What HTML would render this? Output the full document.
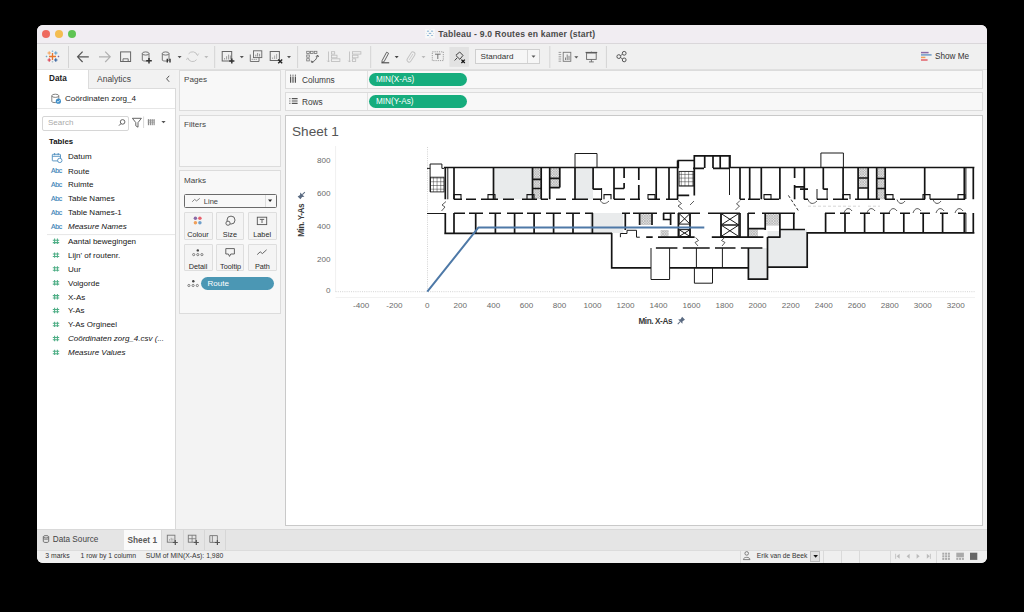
<!DOCTYPE html>
<html><head><meta charset="utf-8">
<style>
*{box-sizing:border-box;margin:0;padding:0}
html,body{width:1024px;height:612px;background:#000;overflow:hidden;font-family:"Liberation Sans",sans-serif;color:#333}
.a{position:absolute}
.t{position:absolute;white-space:nowrap;line-height:1;z-index:6}
svg.a{z-index:5}
#win{position:absolute;left:37px;top:25px;width:950px;height:538px;background:#f3f3f3;border-radius:6px;overflow:hidden}
</style></head><body>
<div id="win"></div>
<!-- title bar -->
<div class="a" style="left:37px;top:25px;width:950px;height:19px;background:#f1edf2;border-radius:6px 6px 0 0;border-bottom:1px solid #dad7da"></div>
<div class="a" style="left:42px;top:30px;width:8px;height:8px;border-radius:50%;background:#ee6a5f"></div>
<div class="a" style="left:55px;top:30px;width:8px;height:8px;border-radius:50%;background:#f4bd50"></div>
<div class="a" style="left:68px;top:30px;width:8px;height:8px;border-radius:50%;background:#5fc454"></div>
<div class="t" style="left:438.2px;top:29.6px;font-size:8.6px;letter-spacing:0.2px;font-weight:bold;color:#4a4a4a">Tableau - 9.0 Routes en kamer (start)</div>
<svg class="a" style="left:0;top:0" width="1024" height="612" fill="none">
 <rect x="425.2" y="28.8" width="9.6" height="9.6" fill="#f8f8f8"/>
 <g fill="#8fb6d6"><ellipse cx="428" cy="31.2" rx="1.2" ry="0.6"/><ellipse cx="432" cy="31.2" rx="1.2" ry="0.6"/><ellipse cx="430" cy="33.4" rx="1.4" ry="0.6"/><ellipse cx="428" cy="35.5" rx="1.2" ry="0.6"/><ellipse cx="432" cy="35.5" rx="1.2" ry="0.6"/><circle cx="426.4" cy="33.4" r="0.35"/><circle cx="433.6" cy="33.4" r="0.35"/><circle cx="430" cy="29.6" r="0.35"/><circle cx="430" cy="37.2" r="0.35"/></g>
</svg>

<!-- toolbar -->
<div class="a" style="left:37px;top:44px;width:950px;height:26px;background:#f0f0f0;border-bottom:1px solid #e0e0e0"></div>


<!-- toolbar icons -->
<svg class="a" style="left:0;top:0" width="1024" height="612" viewBox="0 0 1024 612" fill="none">
 <g stroke-linecap="butt">
  <!-- tableau logo -->
  <g transform="translate(52.5,56.5)">
   <path d="M0,-3.5V3.5M-3.5,0H3.5" stroke="#e8762d" stroke-width="1.3"/>
   <path d="M-3.3,-5.2V-1.8M-5,-3.5H-1.6" stroke="#f5a052" stroke-width="1"/>
   <path d="M3.3,-5.2V-1.8M1.6,-3.5H5" stroke="#5b9bc9" stroke-width="1"/>
   <path d="M-3.3,1.8V5.2M-5,3.5H-1.6" stroke="#d93a4a" stroke-width="1.1"/>
   <path d="M3.3,1.8V5.2M1.6,3.5H5" stroke="#2a5a9a" stroke-width="1.1"/>
   <path d="M0,-6V-4.4M-0.8,-5.2H0.8" stroke="#7ab0d6" stroke-width="0.7"/>
   <path d="M0,4.4V6M-0.8,5.2H0.8" stroke="#a3b7c9" stroke-width="0.7"/>
   <path d="M-6,-0.8V0.8M-6.8,0H-5.2" stroke="#5fa7c9" stroke-width="0.7"/>
   <path d="M6,-0.8V0.8M5.2,0H6.8" stroke="#6a5a9a" stroke-width="0.7"/>
  </g>
  <path d="M68.5,46V68" stroke="#d4d4d4" stroke-width="1"/>
  <!-- back/fwd -->
  <path d="M88.8,56.8H78M82.6,51.6L77.6,56.8L82.6,62" stroke="#555" stroke-width="1.2"/>
  <path d="M99,56.8H109.8M105.2,51.6L110.2,56.8L105.2,62" stroke="#b0b0b0" stroke-width="1.2"/>
  <!-- save -->
  <rect x="120.6" y="51.9" width="10" height="9.6" stroke="#666" stroke-width="1"/>
  <path d="M123,61.5V58.8H128.2V61.5" stroke="#666" stroke-width="0.9"/>
  <!-- db + -->
  <path d="M142.3,53.5V60.2C142.3,61.3 149,61.3 149,60.2V53.5" stroke="#666" stroke-width="0.9"/>
  <ellipse cx="145.65" cy="53.5" rx="3.35" ry="1.6" stroke="#666" stroke-width="0.9"/>
  <path d="M149,58V63.6M146.2,60.8H151.8" stroke="#333" stroke-width="1.5"/>
  <!-- db pause -->
  <path d="M162.3,53.5V60.2C162.3,61.3 169,61.3 169,60.2V53.5" stroke="#666" stroke-width="0.9"/>
  <ellipse cx="165.65" cy="53.5" rx="3.35" ry="1.6" stroke="#666" stroke-width="0.9"/>
  <path d="M167.3,58.8V62.6M170,58.8V62.6" stroke="#333" stroke-width="1.4"/>
  <path d="M177.6,56H181.6L179.6,58.3Z" fill="#555"/>
  <!-- refresh -->
  <path d="M197.4,55.4A5,5 0 0 0 188.6,53.8M187.8,58A5,5 0 0 0 196.6,59.6" stroke="#c4c4c4" stroke-width="1"/><path d="M196.2,53.6L197.6,55.6L198.8,53.4M189,59.8L187.6,57.8L186.4,60" stroke="#c4c4c4" stroke-width="0.8"/>
  <path d="M204.3,56H208.3L206.3,58.3Z" fill="#bbb"/>
  <path d="M214.7,46V68" stroke="#d4d4d4" stroke-width="1"/>
  <!-- new worksheet -->
  <rect x="222.2" y="51.5" width="9.5" height="9.5" stroke="#666" stroke-width="1"/>
  <path d="M224.6,59.5V58M226.6,59.5V56.2M228.6,59.5V54.6M230.4,59.5V55.5" stroke="#888" stroke-width="0.8"/>
  <path d="M231.8,58.4V63.6M229.2,61H234.4" stroke="#333" stroke-width="1.5"/>
  <path d="M239.8,56H243.8L241.8,58.3Z" fill="#555"/>
  <!-- duplicate -->
  <rect x="253.5" y="50.8" width="8.3" height="6.8" stroke="#666" stroke-width="0.9"/>
  <path d="M250.3,54.5V61.5H259V57.6" stroke="#666" stroke-width="0.9"/>
  <path d="M255.8,56.5V54.6M257.6,56.5V53M259.6,56.5V53.8M252.2,60V58.8M254.2,60V58.8M256.2,60V58.8" stroke="#777" stroke-width="0.8"/>
  <!-- clear sheet -->
  <rect x="270.2" y="51.5" width="9.2" height="9" stroke="#666" stroke-width="1"/>
  <path d="M272.6,59V57.5M274.6,59V55.5M276.6,59V54" stroke="#999" stroke-width="0.8"/>
  <path d="M278.2,59.4L282.2,63.2M282.2,59.4L278.2,63.2" stroke="#222" stroke-width="1.4"/>
  <path d="M287,56H291L289,58.3Z" fill="#555"/>
  <path d="M297.6,46V68" stroke="#d4d4d4" stroke-width="1"/>
  <!-- swap -->
  <rect x="306.7" y="51.3" width="2.6" height="2.2" stroke="#777" stroke-width="0.8"/>
  <rect x="310.5" y="51.3" width="2.6" height="2.2" stroke="#777" stroke-width="0.8"/>
  <rect x="314.3" y="51.3" width="2.6" height="2.2" stroke="#777" stroke-width="0.8"/>
  <rect x="306.7" y="55" width="2.6" height="2.2" stroke="#777" stroke-width="0.8"/>
  <rect x="306.7" y="58.7" width="2.6" height="2.2" stroke="#777" stroke-width="0.8"/>
  <path d="M312,61.8C314.5,61.5 316.5,59.5 317.5,55.5M316,56.8L317.6,55L318.6,57M311.2,60.6L311.6,62.4L313.4,62.2" stroke="#555" stroke-width="0.9"/>
  <!-- sort asc/desc -->
  <path d="M328.5,51.5V62M327.2,60.6L328.5,62L329.8,60.6" stroke="#bbb" stroke-width="0.8"/>
  <rect x="331.5" y="51.7" width="3.2" height="2.4" stroke="#bbb" stroke-width="0.8"/>
  <rect x="331.5" y="55.2" width="5.5" height="2.6" stroke="#bbb" stroke-width="0.8"/>
  <rect x="331.5" y="58.8" width="8.4" height="2.6" stroke="#bbb" stroke-width="0.8"/>
  <path d="M349.5,51.5V62M348.2,60.6L349.5,62L350.8,60.6" stroke="#bbb" stroke-width="0.8"/>
  <rect x="352.5" y="51.7" width="8.4" height="2.4" stroke="#bbb" stroke-width="0.8"/>
  <rect x="352.5" y="55.2" width="5.5" height="2.6" stroke="#bbb" stroke-width="0.8"/>
  <rect x="352.5" y="58.8" width="3.2" height="2.6" stroke="#bbb" stroke-width="0.8"/>
  <path d="M370.7,46V68" stroke="#d4d4d4" stroke-width="1"/>
  <!-- pen -->
  <path d="M382,60.8L386.6,52.2L388.6,53.3L384,61.8L382,62.3Z" stroke="#555" stroke-width="0.9"/>
  <path d="M381.4,62.8H389.2" stroke="#444" stroke-width="1.1"/>
  <path d="M394.7,56H398.7L396.7,58.3Z" fill="#444"/>
  <!-- paperclip -->
  <g transform="translate(411,57) rotate(-58)"><rect x="-5.6" y="-2.1" width="11.2" height="4.2" rx="2.1" stroke="#c2c2c2" stroke-width="0.9"/><path d="M-3.4,0H3.6" stroke="#c8c8c8" stroke-width="0.8"/></g>
  <path d="M421.5,56H425.5L423.5,58.3Z" fill="#bbb"/>
  <!-- T box -->
  <rect x="432.3" y="51.8" width="11" height="8.8" stroke="#888" stroke-width="0.8" stroke-dasharray="1.2 1"/>
  <path d="M435,54.2H440.6M437.8,54.2V59" stroke="#666" stroke-width="0.9"/>
  <!-- pin pressed -->
  <rect x="449.4" y="47" width="19.5" height="19.8" fill="#e2e2e2" stroke="none"/>
  <path d="M454.6,60.5L457.2,57.8M456,55.2L459.7,52L463,55.4L459.9,59.3M455.8,55.4L460,59.5" stroke="#444" stroke-width="1"/>
  <path d="M461.4,59.6L464.8,63M464.8,59.6L461.4,63" stroke="#111" stroke-width="1.3"/>
  <!-- standard dropdown -->
  <rect x="475.5" y="49.5" width="64" height="14" fill="#f6f6f6" stroke="#cfcfcf" stroke-width="1"/>
  <path d="M527.5,50V63" stroke="#d6d6d6" stroke-width="1"/>
  <path d="M531.5,55.5H535.5L533.5,57.8Z" fill="#555"/>
  <path d="M549.8,46V68" stroke="#d4d4d4" stroke-width="1"/>
  <!-- show labels icon -->
  <rect x="563.2" y="52.3" width="7.6" height="9" stroke="#777" stroke-width="0.9"/>
  <path d="M565.5,60V57.5M567.2,60V54.5M569,60V55.8" stroke="#666" stroke-width="0.8"/>
  <path d="M558.6,52.4H561.2M558.6,54.6H561.2M558.6,56.8H561.2M558.6,59H561.2M558.6,61.2H561.2" stroke="#888" stroke-width="0.8"/>
  <path d="M574.3,56.3H578.3L576.3,58.6Z" fill="#555"/>
  <!-- presentation -->
  <path d="M585.6,52.5H597.2" stroke="#555" stroke-width="1.2"/>
  <rect x="586.6" y="53" width="9.6" height="6.4" stroke="#666" stroke-width="0.9"/>
  <path d="M591.4,59.4V61.8M589,61.9H593.8M591.4,51.6V52.5" stroke="#666" stroke-width="0.9"/>
  <path d="M606.4,46V68" stroke="#d4d4d4" stroke-width="1"/>
  <!-- share -->
  <circle cx="618.8" cy="56.6" r="1.9" stroke="#555" stroke-width="1"/>
  <circle cx="624.2" cy="53.3" r="1.9" stroke="#555" stroke-width="1"/>
  <circle cx="624.2" cy="59.9" r="1.9" stroke="#555" stroke-width="1"/>
  <path d="M620.5,55.6L622.5,54.3M620.5,57.6L622.5,58.9" stroke="#555" stroke-width="0.9"/>
  <!-- show me -->
  <path d="M921,52.6H928.6" stroke="#8a6aa6" stroke-width="1.5"/>
  <path d="M921,54.9H931.6" stroke="#6f9bc8" stroke-width="1.5"/>
  <path d="M921,57.4H925.4" stroke="#eea05a" stroke-width="1.5"/>
  <path d="M921,60H927.6" stroke="#e2606a" stroke-width="1.5"/>
 </g>
</svg>
<div class="t" style="left:480.6px;top:52.8px;font-size:8.1px;color:#333">Standard</div>
<div class="t" style="left:935px;top:52.8px;font-size:8.2px;color:#333">Show Me</div>

<!-- left data pane -->
<div class="a" style="left:37px;top:70px;width:139px;height:459px;background:#fff;border-right:1px solid #d9d9d9"></div>
<div class="a" style="left:88px;top:70px;width:88px;height:19px;background:#f2f2f2;border-left:1px solid #dcdcdc;border-bottom:1px solid #dcdcdc"></div>
<div class="t" style="left:49px;top:75.3px;font-size:8.2px;font-weight:bold;color:#222">Data</div>
<div class="t" style="left:97px;top:75px;font-size:8.5px;color:#444">Analytics</div>
<div class="a" style="left:37px;top:108px;width:138px;height:1px;background:#e6e6e6"></div>
<div class="t" style="left:65px;top:94.6px;font-size:8.1px;color:#222">Coördinaten zorg_4</div>
<div class="a" style="left:42px;top:116px;width:87px;height:15px;background:#fff;border:1px solid #d6d6d6;border-radius:2px"></div>
<div class="t" style="left:48px;top:119px;font-size:8px;color:#aaa">Search</div>
<div class="t" style="left:49px;top:138.4px;font-size:7.8px;font-weight:bold;color:#111">Tables</div>

<div class="t" style="left:68px;top:153.4px;font-size:8px;color:#151515;">Datum</div>
<div class="t" style="left:68px;top:167.5px;font-size:8px;color:#151515;">Route</div>
<div class="t" style="left:51px;top:168.2px;font-size:6.9px;color:#3b84b8;letter-spacing:-0.35px;font-weight:normal;-webkit-text-stroke:0.15px #3b84b8">Abc</div>
<div class="t" style="left:68px;top:181.4px;font-size:8px;color:#151515;">Ruimte</div>
<div class="t" style="left:51px;top:182.1px;font-size:6.9px;color:#3b84b8;letter-spacing:-0.35px;font-weight:normal;-webkit-text-stroke:0.15px #3b84b8">Abc</div>
<div class="t" style="left:68px;top:195.1px;font-size:8px;color:#151515;">Table Names</div>
<div class="t" style="left:51px;top:195.8px;font-size:6.9px;color:#3b84b8;letter-spacing:-0.35px;font-weight:normal;-webkit-text-stroke:0.15px #3b84b8">Abc</div>
<div class="t" style="left:68px;top:208.9px;font-size:8px;color:#151515;">Table Names-1</div>
<div class="t" style="left:51px;top:209.6px;font-size:6.9px;color:#3b84b8;letter-spacing:-0.35px;font-weight:normal;-webkit-text-stroke:0.15px #3b84b8">Abc</div>
<div class="t" style="left:68px;top:222.9px;font-size:8px;color:#151515;font-style:italic;">Measure Names</div>
<div class="t" style="left:51px;top:223.6px;font-size:6.9px;color:#3b84b8;letter-spacing:-0.35px;font-weight:normal;-webkit-text-stroke:0.15px #3b84b8">Abc</div>
<div class="t" style="left:68px;top:238.1px;font-size:8px;color:#151515;">Aantal bewegingen</div>
<div class="t" style="left:68px;top:251.9px;font-size:8px;color:#151515;">Lijn' of routenr.</div>
<div class="t" style="left:68px;top:265.7px;font-size:8px;color:#151515;">Uur</div>
<div class="t" style="left:68px;top:279.6px;font-size:8px;color:#151515;">Volgorde</div>
<div class="t" style="left:68px;top:293.5px;font-size:8px;color:#151515;">X-As</div>
<div class="t" style="left:68px;top:307.3px;font-size:8px;color:#151515;">Y-As</div>
<div class="t" style="left:68px;top:321.2px;font-size:8px;color:#151515;">Y-As Orgineel</div>
<div class="t" style="left:68px;top:335.3px;font-size:8px;color:#151515;font-style:italic;">Coördinaten zorg_4.csv (...</div>
<div class="t" style="left:68px;top:349.2px;font-size:8px;color:#151515;font-style:italic;">Measure Values</div>
<svg class="a" style="left:0;top:0" width="1024" height="612" fill="none">
<g transform="translate(0,0.9)"><rect x="52.3" y="153.4" width="8.2" height="6.6" rx="0.6" stroke="#4f8fbf" stroke-width="0.9"/>
<path d="M52.3,155.4H60.5M54.6,152.1V154.3M58.2,152.1V154.3" stroke="#4f8fbf" stroke-width="0.9"/>
<circle cx="59.8" cy="159.5" r="2.2" fill="#fff" stroke="#4f8fbf" stroke-width="0.9"/></g>
<path d="M54.6,238.6V244.0M57.4,238.6V244.0M52.8,240.2H59.2M52.8,242.6H59.2" stroke="#4fae86" stroke-width="1.05"/>
<path d="M54.6,252.4V257.8M57.4,252.4V257.8M52.8,254.0H59.2M52.8,256.4H59.2" stroke="#4fae86" stroke-width="1.05"/>
<path d="M54.6,266.2V271.6M57.4,266.2V271.6M52.8,267.8H59.2M52.8,270.2H59.2" stroke="#4fae86" stroke-width="1.05"/>
<path d="M54.6,280.1V285.5M57.4,280.1V285.5M52.8,281.7H59.2M52.8,284.1H59.2" stroke="#4fae86" stroke-width="1.05"/>
<path d="M54.6,294.0V299.4M57.4,294.0V299.4M52.8,295.6H59.2M52.8,298.0H59.2" stroke="#4fae86" stroke-width="1.05"/>
<path d="M54.6,307.8V313.2M57.4,307.8V313.2M52.8,309.4H59.2M52.8,311.8H59.2" stroke="#4fae86" stroke-width="1.05"/>
<path d="M54.6,321.7V327.1M57.4,321.7V327.1M52.8,323.3H59.2M52.8,325.7H59.2" stroke="#4fae86" stroke-width="1.05"/>
<path d="M54.6,335.8V341.2M57.4,335.8V341.2M52.8,337.4H59.2M52.8,339.8H59.2" stroke="#4fae86" stroke-width="1.05"/>
<path d="M54.6,349.7V355.1M57.4,349.7V355.1M52.8,351.3H59.2M52.8,353.7H59.2" stroke="#4fae86" stroke-width="1.05"/>
<path d="M47,234.6H175" stroke="#e6e6e6" stroke-width="1"/>
<!-- db icon -->
<path d="M51.8,95.8V101.6C51.8,102.9 58.8,102.9 58.8,101.6V95.8" stroke="#777" stroke-width="0.9"/>
<ellipse cx="55.3" cy="95.8" rx="3.5" ry="1.6" stroke="#777" stroke-width="0.9"/>
<circle cx="58.4" cy="101.2" r="2.6" fill="#3f8fc9"/>
<path d="M57.1,101.3L58.1,102.2L59.8,100.3" stroke="#fff" stroke-width="0.8"/>
<!-- search magnifier -->
<circle cx="122.6" cy="121.9" r="2.3" stroke="#555" stroke-width="0.9"/>
<path d="M121,123.6L119,125.6" stroke="#555" stroke-width="1"/>
<!-- filter icon -->
<path d="M132.4,118.3H141.4L138,122.6V127.2L135.8,125.8V122.6Z" stroke="#555" stroke-width="0.9"/>
<path d="M143.6,116.5V128" stroke="#d8d8d8" stroke-width="1"/>
<!-- grid icon -->
<path d="M148.4,119.2V125.2M150.3,119.2V125.2M152.2,119.2V125.2M154.1,119.2V125.2" stroke="#777" stroke-width="1"/><path d="M147.8,120.3H154.6M147.8,122.2H154.6" stroke="#999" stroke-width="0.6"/>
<path d="M161.4,121H165.6L163.5,123.3Z" fill="#555"/>
<!-- collapse chevron -->
<path d="M169.2,75.8L166.6,78.8L169.2,81.8" stroke="#555" stroke-width="1"/>
</svg>

<!-- shelves column -->
<div class="a" style="left:179px;top:70px;width:102px;height:41px;background:#f8f8f8;border:1px solid #dcdcdc"></div>
<div class="t" style="left:184px;top:76px;font-size:8.1px;color:#444">Pages</div>
<div class="a" style="left:179px;top:115px;width:102px;height:51.6px;background:#f8f8f8;border:1px solid #dcdcdc"></div>
<div class="t" style="left:184px;top:121px;font-size:8.1px;color:#444">Filters</div>
<div class="a" style="left:179px;top:170px;width:102px;height:144px;background:#f8f8f8;border:1px solid #dcdcdc"></div>
<div class="t" style="left:184px;top:176.5px;font-size:8.1px;color:#444">Marks</div>


<!-- marks card -->
<div class="a" style="left:184px;top:194.4px;width:92.5px;height:13.2px;background:#f8f8f8;border:1px solid #6a6a6a;border-radius:1.5px"></div>
<div class="a" style="left:264.6px;top:195.4px;width:1px;height:11.2px;background:#ddd"></div>
<div class="t" style="left:203.8px;top:197.6px;font-size:7.5px;color:#444">Line</div>
<div class="a" style="left:184.1px;top:212px;width:28.6px;height:27.6px;background:#f4f4f4;border:1px solid #dedede;border-radius:1px"></div>
<div class="a" style="left:216.3px;top:212px;width:27.4px;height:27.6px;background:#f4f4f4;border:1px solid #dedede;border-radius:1px"></div>
<div class="a" style="left:248.2px;top:212px;width:28.5px;height:27.6px;background:#f4f4f4;border:1px solid #dedede;border-radius:1px"></div>
<div class="a" style="left:184.1px;top:243.6px;width:28.6px;height:27.5px;background:#f4f4f4;border:1px solid #dedede;border-radius:1px"></div>
<div class="a" style="left:216.3px;top:243.6px;width:27.4px;height:27.5px;background:#f4f4f4;border:1px solid #dedede;border-radius:1px"></div>
<div class="a" style="left:248.2px;top:243.6px;width:28.5px;height:27.5px;background:#f4f4f4;border:1px solid #dedede;border-radius:1px"></div>
<div class="t" style="left:177.9px;width:40px;text-align:center;top:230.7px;font-size:7.3px;color:#2a2a2a">Colour</div>
<div class="t" style="left:209.9px;width:40px;text-align:center;top:230.7px;font-size:7.3px;color:#2a2a2a">Size</div>
<div class="t" style="left:242.2px;width:40px;text-align:center;top:230.7px;font-size:7.3px;color:#2a2a2a">Label</div>
<div class="t" style="left:178.0px;width:40px;text-align:center;top:262.5px;font-size:7.3px;color:#2a2a2a">Detail</div>
<div class="t" style="left:210.6px;width:40px;text-align:center;top:262.5px;font-size:7.3px;color:#2a2a2a">Tooltip</div>
<div class="t" style="left:242.4px;width:40px;text-align:center;top:262.5px;font-size:7.3px;color:#2a2a2a">Path</div>
<div class="a" style="left:200.7px;top:277.1px;width:73.4px;height:13.4px;background:#4b97b4;border-radius:7px"></div>
<div class="t" style="left:207.6px;top:279.6px;font-size:8px;color:#fff">Route</div>
<svg class="a" style="left:0;top:0" width="1024" height="612" fill="none">
 <path d="M192.2,201.8L194.6,199.4L196.6,200.9L199.8,198.4" stroke="#777" stroke-width="0.9"/>
 <path d="M268,199.6H272.2L270.1,202Z" fill="#222"/>
 <circle cx="195.4" cy="218.3" r="1.75" fill="#8a6aa6"/>
 <circle cx="199.9" cy="218.3" r="1.75" fill="#e8616d"/>
 <circle cx="195.4" cy="222.7" r="1.75" fill="#f0a05a"/>
 <circle cx="199.9" cy="222.7" r="1.75" fill="#6f9fcb"/>
 <circle cx="231" cy="220.1" r="4" stroke="#555" stroke-width="0.9"/>
 <circle cx="228" cy="223.2" r="2.1" fill="#f4f4f4" stroke="#555" stroke-width="0.9"/>
 <rect x="257.3" y="217.2" width="9.4" height="7.4" stroke="#555" stroke-width="0.9"/>
 <path d="M259.8,219.4H264.2M262,219.4V223" stroke="#555" stroke-width="0.9"/>
 <circle cx="197.8" cy="250.4" r="1.2" fill="#444"/>
 <circle cx="193.7" cy="254.6" r="1.1" stroke="#555" stroke-width="0.7"/>
 <circle cx="197.8" cy="254.6" r="1.1" stroke="#555" stroke-width="0.7"/>
 <circle cx="201.9" cy="254.6" r="1.1" stroke="#555" stroke-width="0.7"/>
 <path d="M225.8,248.6H234.4V254H230.8L229.5,256.4L228.4,254H225.8Z" stroke="#555" stroke-width="0.9"/>
 <path d="M257.2,254.6L260.2,251.8L262.4,253.6L266.6,249.8" stroke="#555" stroke-width="0.9"/>
 <circle cx="193.3" cy="281.3" r="1.2" fill="#444"/>
 <circle cx="188.9" cy="285.5" r="1.1" stroke="#555" stroke-width="0.7"/>
 <circle cx="193.1" cy="285.5" r="1.1" stroke="#555" stroke-width="0.7"/>
 <circle cx="197.3" cy="285.5" r="1.1" stroke="#555" stroke-width="0.7"/>
 <!-- columns / rows icons -->
 <path d="M290.6,76.5V82.8M293,76.5V82.8M295.4,76.5V82.8" stroke="#555" stroke-width="1.2"/>
 <circle cx="290.6" cy="75.2" r="0.6" fill="#555"/><circle cx="293" cy="75.2" r="0.6" fill="#555"/><circle cx="295.4" cy="75.2" r="0.6" fill="#555"/>
 <path d="M291.8,98.6H297.6M291.8,101H297.6M291.8,103.4H297.6" stroke="#555" stroke-width="1.1"/>
 <path d="M289.4,98.6H290.4M289.4,101H290.4M289.4,103.4H290.4" stroke="#555" stroke-width="1.1"/>
</svg>

<!-- columns / rows shelves -->
<div class="a" style="left:285px;top:70px;width:698px;height:19px;background:#f8f8f8;border:1px solid #dcdcdc"></div>
<div class="a" style="left:367px;top:71px;width:1px;height:17px;background:#e2e2e2"></div>
<div class="t" style="left:302px;top:75.6px;font-size:8.3px;color:#3a3a3a">Columns</div>
<div class="a" style="left:369px;top:72.5px;width:98px;height:13.5px;border-radius:7px;background:#16ad7d"></div>
<div class="t" style="left:376px;top:76.1px;font-size:8.2px;color:#fff">MIN(X-As)</div>
<div class="a" style="left:285px;top:92px;width:698px;height:19px;background:#f8f8f8;border:1px solid #dcdcdc"></div>
<div class="a" style="left:367px;top:93px;width:1px;height:17px;background:#e2e2e2"></div>
<div class="t" style="left:302px;top:97.8px;font-size:8.3px;color:#3a3a3a">Rows</div>
<div class="a" style="left:369px;top:95px;width:98px;height:13px;border-radius:7px;background:#16ad7d"></div>
<div class="t" style="left:376px;top:98.4px;font-size:8.2px;color:#fff">MIN(Y-As)</div>

<!-- view -->
<div class="a" style="left:285px;top:115px;width:698px;height:411px;background:#fff;border:1px solid #c9c9c9"></div>
<div class="t" style="left:292px;top:125px;font-size:13.6px;color:#555">Sheet 1</div>

<!-- CHART -->
<svg class="a" style="left:0;top:0" width="1024" height="612" fill="none">
<defs><pattern id="hat" width="2.6" height="2.6" patternUnits="userSpaceOnUse"><rect width="2.6" height="2.6" fill="#e4e4e4"/><path d="M0,0L2.6,2.6M2.6,0L0,2.6" stroke="#9a9a9a" stroke-width="0.5"/></pattern><pattern id="grd" width="3.7" height="3.7" patternUnits="userSpaceOnUse"><rect width="3.7" height="3.7" fill="#fff"/><path d="M0,0H3.7M0,0V3.7" stroke="#222" stroke-width="0.9"/></pattern></defs>
<path d="M335.6,146V292" stroke="#f0f0f0" stroke-width="1"/>
<path d="M335.6,291.7H975" stroke="#c8c8c8" stroke-width="0.8" stroke-dasharray="1 1.2"/>
<path d="M427.5,147V291.7" stroke="#c8c8c8" stroke-width="0.8" stroke-dasharray="1 1.2"/>
<path d="M335.6,297.5H975" stroke="#f2f2f2" stroke-width="1"/>
<rect x="493.5" y="168" width="38.5" height="31.3" fill="#e9ebec"/>
<rect x="575" y="168" width="18.0" height="31.3" fill="#e9ebec"/>
<rect x="590" y="213" width="33.3" height="20.0" fill="#e9ebec"/>
<rect x="748.4" y="248" width="19.1" height="31.0" fill="#e9ebec"/>
<rect x="767.5" y="231" width="39.5" height="36.2" fill="#e9ebec"/>
<rect x="780" y="229.5" width="27.0" height="3.5" fill="#e9ebec"/>
<rect x="532.5" y="168" width="8.7" height="31.3" fill="url(#hat)"/>
<rect x="549.7" y="168" width="10.1" height="19.6" fill="url(#hat)"/>
<rect x="858.1" y="168" width="10.1" height="20.0" fill="url(#hat)"/>
<rect x="876.7" y="168" width="8.5" height="31.3" fill="url(#hat)"/>
<rect x="639.6" y="213.3" width="11.9" height="11.7" fill="url(#hat)"/>
<rect x="660.6" y="230" width="8.0" height="7.0" fill="url(#hat)"/>
<rect x="765.5" y="213.6" width="14.1" height="12.0" fill="url(#hat)"/>
<rect x="749" y="229.5" width="9.0" height="7.5" fill="url(#hat)"/>
<rect x="430.5" y="177.2" width="13.5" height="14.7" fill="url(#grd)" stroke="#222" stroke-width="0.9"/>
<rect x="679.1" y="171.4" width="14.7" height="14.7" fill="url(#grd)" stroke="#222" stroke-width="0.9"/>
<path d="M444,167.5H678.3V160.5H694.3V155.9H730V167.5H974.4 M445.3,167.5V199.3M445.3,213V233.5M973.3,167.5V199.3M973.3,213V233 M444.3,233.3H612 M611.7,233V267.8H651M669.6,267.8H748.4 M748.4,248V279.1H767.5V237 M767.5,267.2H807.2V232.9H974.4 M711.8,237.2H763.4M658,237.2H694.6M646.2,237.2H652.7M767.7,237.2H780.6 M532.5,179.4H541.2M532.5,188.5H541.2M549.7,178.3H559.8M858.1,178H868.2M876.7,178.5H885.2M876.7,188.5H885.2 M704.7,155.9V168M713,155.9V168M720.2,155.9V168M693,168.3H704M713,168.3H730 M454,167.5V199.3 M493.5,167.5V199.3 M532.5,167.5V199.3 M541.2,167.5V199.3 M549.7,167.5V199.3 M559.8,167.5V187.6 M575,167.5V199.3 M593.1,167.5V189.2 M614,167.5V199.3 M624.1,167.5V178 M624.1,183V188.5 M638.8,167.5V180 M638.8,185V199.3 M656.2,167.5V199.3 M669,167.5V199.3 M677.6,160.5V199.3 M694.3,155.9V195.4 M729.5,155.9V168 M740,167.5V199.3 M749.7,167.5V199.3 M761.3,167.5V199.3 M779.9,167.5V199.3 M794.6,167.5V178 M794.6,185V199.3 M804.3,167.5V199.3 M823.3,167.5V189.2 M843.1,167.5V199.3 M858.1,167.5V199.3 M868.2,167.5V199.3 M876.7,167.5V199.3 M885.2,167.5V199.3 M924.7,167.5V199.3 M964.3,167.5V199.3 M549.7,187.6H559.8M858.1,188H868.2M614,188.5H624.1M794.6,186.9H805M593.1,189.2H602M800,189.2H808M823.3,189.2H828M678,195.4H689.2 M454,213V233.3 M475.7,213V233.3 M495.4,213V233.3 M514.6,213V233.3 M534.1,213V233.3 M553.6,213V233.3 M573,213V233.3 M592.4,213V233.3 M625.3,213V230 M639.6,213V225 M652,213V225 M670.6,213V225 M678.4,213V237 M690,213V237 M721,213V237 M740,213V237 M748.1,213V237 M765.2,213V230 M779.9,213V237 M793.8,213V230 M825.6,213V233 M845,213V233 M864.6,213V233 M883.7,213V233 M903.8,213V233 M923.2,213V233 M942.6,213V233 M964.3,213V233 M748,228.7H765.2M779.9,229.5H805M663.6,213V219.5H670.6" stroke="#141414" stroke-width="1.7"/>
<path d="M454,199.3H462 M466,199.3H476 M481,199.3H488 M488,199.3H498 M503,199.3H514 M522,199.3H527 M527,199.3H537 M541,199.3H548 M556,199.3H566 M572,199.3H588 M593,199.3H602 M614,199.3H625 M630,199.3H640 M648,199.3H660 M666,199.3H678 M740,199.3H745 M748,199.3H760 M764,199.3H770 M770,199.3H779 M804,199.3H808 M817,199.3H828 M833,199.3H848 M855,199.3H880 M885,199.3H895 M900,199.3H925 M930,199.3H958 M958,199.3H965" stroke="#141414" stroke-width="1.6"/>
<path d="M454,199.3V194.6H461V199.3 M488,199.3V194.6H495V199.3 M527,199.3V194.6H534V199.3 M604,199.3V194.6H611V199.3 M648,199.3V194.6H655V199.3 M764,199.3V194.6H771V199.3 M843,199.3V194.6H850V199.3 M886,199.3V194.6H893V199.3 M923,199.3V194.6H930V199.3 M958,199.3V194.6H965V199.3" stroke="#141414" stroke-width="1.1"/>
<path d="M454,213.2H465 M469,213.2H483 M489,213.2H501 M507,213.2H523 M527,213.2H541 M546,213.2H561 M566,213.2H580 M585,213.2H593 M622,213.2H630 M633,213.2H646 M645,213.2H657 M663,213.2H675 M678,213.2H700 M708,213.2H740 M748,213.2H755 M762,213.2H795 M825,213.2H835 M840,213.2H850 M860,213.2H870 M880,213.2H890 M900,213.2H910 M920,213.2H930 M940,213.2H948 M958,213.2H966" stroke="#141414" stroke-width="1.6"/>
<path d="M655.9,248H677.4M682.8,248H709.7M715,248H735.5M740.9,248H762.4" stroke="#141414" stroke-width="1.6"/>
<path d="M427,168.4H430.1M427,213.5H445.3 M430.1,191.9V164H441.9V168.4H444 M447.8,168V199.3M965.9,168V199M965.9,213V233 M575,167.5V153.5H597V167.5 M820.9,167.5V153H843.4V167.5 M651,248V279.5H669.6V248 M694.4,267.2V283.2H712.5V267.2 M696.4,248V267.2M722.4,248V267.2 M679.1,213.5H690V224.1H679.1ZM679.1,213.5L690,224.1M690,213.5L679.1,224.1 M679.1,229.6H690V236.5H679.1ZM679.1,229.6L690,236.5M690,229.6L679.1,236.5 M721,213.5H738.8V225H721ZM721,213.5L738.8,225M738.8,213.5L721,225 M721,225H738.8V236.5H721ZM721,225L738.8,236.5M738.8,225L721,236.5 M601.6,188V199.3M817,189V199.3M827.1,189V199.3 M729.5,168V195 M620.4,237.2V233.5H627V230.3H636.5V237.2H639.8" stroke="#1a1a1a" stroke-width="1"/>
<path d="M788.4,195.4L798.5,210.9" stroke="#333" stroke-width="1" stroke-dasharray="3 2"/>
<path d="M808,206.2H860M868,206.2H880" stroke="#bbb" stroke-width="0.6" stroke-dasharray="3 2"/>
<path d="M446,201.5L442,205L445,207L441.5,211M678,200.5L681.5,203.5L678,206L682.5,209.5M740,200.5L736.5,204L739.5,206L735.5,210 M600,199.5C602,205 606,204 609,201M808,199.5C810,205 814,204 817,201M897,199.5C899,205 903,204 905,201M933,199.5C935,205 939,204 941,201 M867,213C869,207 873,208 875,211M889,213C891,207 895,208 897,211M913,213C915,207 919,208 921,211M936,213C938,207 942,208 944,211M955,213C957,207 961,208 963,211M844,213C846,207 850,208 852,211 M695.7,237.5L698.5,240.5L695,242.5L698,246M724.7,237.5L721.5,240.5L725,242.5L722,246M694,201L690,205" stroke="#333" stroke-width="0.8"/>
<path d="M427.3,291.7L478.5,227.4H704.3" stroke="#4e79a7" stroke-width="2" stroke-linejoin="round"/>
<text x="330.5" y="163.1" text-anchor="end" font-family="Liberation Sans" font-size="8.1" fill="#6a6a6a">800</text>
<text x="330.5" y="196.0" text-anchor="end" font-family="Liberation Sans" font-size="8.1" fill="#6a6a6a">600</text>
<text x="330.5" y="229.4" text-anchor="end" font-family="Liberation Sans" font-size="8.1" fill="#6a6a6a">400</text>
<text x="330.5" y="262.3" text-anchor="end" font-family="Liberation Sans" font-size="8.1" fill="#6a6a6a">200</text>
<text x="330.5" y="292.7" text-anchor="end" font-family="Liberation Sans" font-size="8.1" fill="#6a6a6a">0</text>
<text x="361.2" y="308.3" text-anchor="middle" font-family="Liberation Sans" font-size="8.1" fill="#6a6a6a">-400</text>
<text x="394.3" y="308.3" text-anchor="middle" font-family="Liberation Sans" font-size="8.1" fill="#6a6a6a">-200</text>
<text x="427.3" y="308.3" text-anchor="middle" font-family="Liberation Sans" font-size="8.1" fill="#6a6a6a">0</text>
<text x="460.3" y="308.3" text-anchor="middle" font-family="Liberation Sans" font-size="8.1" fill="#6a6a6a">200</text>
<text x="493.4" y="308.3" text-anchor="middle" font-family="Liberation Sans" font-size="8.1" fill="#6a6a6a">400</text>
<text x="526.4" y="308.3" text-anchor="middle" font-family="Liberation Sans" font-size="8.1" fill="#6a6a6a">600</text>
<text x="559.4" y="308.3" text-anchor="middle" font-family="Liberation Sans" font-size="8.1" fill="#6a6a6a">800</text>
<text x="592.5" y="308.3" text-anchor="middle" font-family="Liberation Sans" font-size="8.1" fill="#6a6a6a">1000</text>
<text x="625.5" y="308.3" text-anchor="middle" font-family="Liberation Sans" font-size="8.1" fill="#6a6a6a">1200</text>
<text x="658.5" y="308.3" text-anchor="middle" font-family="Liberation Sans" font-size="8.1" fill="#6a6a6a">1400</text>
<text x="691.6" y="308.3" text-anchor="middle" font-family="Liberation Sans" font-size="8.1" fill="#6a6a6a">1600</text>
<text x="724.6" y="308.3" text-anchor="middle" font-family="Liberation Sans" font-size="8.1" fill="#6a6a6a">1800</text>
<text x="757.6" y="308.3" text-anchor="middle" font-family="Liberation Sans" font-size="8.1" fill="#6a6a6a">2000</text>
<text x="790.7" y="308.3" text-anchor="middle" font-family="Liberation Sans" font-size="8.1" fill="#6a6a6a">2200</text>
<text x="823.7" y="308.3" text-anchor="middle" font-family="Liberation Sans" font-size="8.1" fill="#6a6a6a">2400</text>
<text x="856.7" y="308.3" text-anchor="middle" font-family="Liberation Sans" font-size="8.1" fill="#6a6a6a">2600</text>
<text x="889.7" y="308.3" text-anchor="middle" font-family="Liberation Sans" font-size="8.1" fill="#6a6a6a">2800</text>
<text x="922.8" y="308.3" text-anchor="middle" font-family="Liberation Sans" font-size="8.1" fill="#6a6a6a">3000</text>
<text x="955.8" y="308.3" text-anchor="middle" font-family="Liberation Sans" font-size="8.1" fill="#6a6a6a">3200</text>
<text transform="translate(304.2,220.3) rotate(-90)" text-anchor="middle" font-family="Liberation Sans" font-size="8.2" letter-spacing="-0.4" font-weight="bold" fill="#3a3a3a">Min. Y-As</text>
<text x="638.4" y="324.2" font-family="Liberation Sans" font-size="8.2" letter-spacing="-0.4" font-weight="bold" fill="#3a3a3a">Min. X-As</text>
<g transform="translate(301.6,195.4) rotate(-135)" fill="#5b6b82"><path d="M-2,-3.6H2L1.4,-0.8L3,1H-3L-1.4,-0.8Z"/><path d="M0,1V4.6" stroke="#5b6b82" stroke-width="1"/></g>
<g transform="translate(681,320.8) rotate(45)" fill="#5b6b82"><path d="M-2,-3.6H2L1.4,-0.8L3,1H-3L-1.4,-0.8Z"/><path d="M0,1V4.6" stroke="#5b6b82" stroke-width="1"/></g>
</svg>
<!-- /CHART -->
<!-- tab bar -->
<div class="a" style="left:37px;top:529px;width:950px;height:20.5px;background:#e5e5e5;border-top:1px solid #d9d9d9"></div>
<div class="a" style="left:123.5px;top:530px;width:38px;height:19.5px;background:#fafafa"></div>
<div class="a" style="left:161.4px;top:530px;width:1px;height:19.5px;background:#d6d6d6"></div>
<div class="a" style="left:182.6px;top:530px;width:1px;height:19.5px;background:#d6d6d6"></div>
<div class="a" style="left:203.6px;top:530px;width:1px;height:19.5px;background:#d6d6d6"></div>
<div class="a" style="left:224.5px;top:530px;width:1px;height:19.5px;background:#d6d6d6"></div>
<div class="t" style="left:52.8px;top:536.3px;font-size:8.2px;color:#444">Data Source</div>
<div class="t" style="left:127.5px;top:536.2px;font-size:8.3px;font-weight:bold;color:#5a5a5a">Sheet 1</div>

<!-- status bar -->
<div class="a" style="left:37px;top:549.5px;width:950px;height:13.5px;background:#efefef;border-top:1px solid #dcdcdc;border-radius:0 0 6px 6px"></div>
<div class="a" style="left:739.6px;top:550px;width:1px;height:13px;background:#dadada"></div>
<div class="a" style="left:823.1px;top:550px;width:1px;height:13px;background:#dadada"></div>
<div class="a" style="left:840.8px;top:550px;width:1px;height:13px;background:#dadada"></div>
<div class="a" style="left:858.5px;top:550px;width:1px;height:13px;background:#dadada"></div>
<div class="a" style="left:889.5px;top:550px;width:1px;height:13px;background:#dadada"></div>
<div class="a" style="left:935.8px;top:550px;width:1px;height:13px;background:#dadada"></div>
<div class="t" style="left:45.3px;top:553px;font-size:6.85px;color:#333">3 marks</div>
<div class="t" style="left:80.5px;top:553px;font-size:6.85px;color:#333">1 row by 1 column</div>
<div class="t" style="left:145.7px;top:553px;font-size:6.85px;color:#333">SUM of MIN(X-As): 1,980</div>
<div class="t" style="left:756.8px;top:553.2px;font-size:6.7px;color:#333">Erik van de Beek</div>
<div class="a" style="left:810.1px;top:551.3px;width:10.4px;height:10.6px;background:#e0e0e0;border:1px solid #bdbdbd"></div>
<svg class="a" style="left:0;top:0" width="1024" height="612" fill="none">
 <!-- data source db icon -->
 <path d="M43.3,536.8V541.6C43.3,542.8 48.7,542.8 48.7,541.6V536.8" stroke="#666" stroke-width="0.9"/>
 <ellipse cx="46" cy="536.8" rx="2.7" ry="1.2" stroke="#666" stroke-width="0.9"/>
 <path d="M43.3,538.6C43.3,539.6 48.7,539.6 48.7,538.6" stroke="#666" stroke-width="0.7"/>
 <!-- new worksheet -->
 <rect x="167.3" y="535.2" width="7.6" height="7" stroke="#777" stroke-width="0.9"/>
 <path d="M169.5,540.6V539.2M171.2,540.6V537.8M172.9,540.6V538.5" stroke="#888" stroke-width="0.7"/>
 <path d="M175.3,540V545M172.8,542.5H177.8" stroke="#555" stroke-width="1.2"/>
 <!-- new dashboard -->
 <rect x="188.3" y="535.2" width="7.6" height="7" stroke="#777" stroke-width="0.9"/>
 <path d="M192.1,535.2V542.2M188.3,538.7H195.9" stroke="#777" stroke-width="0.8"/>
 <path d="M196.3,540V545M193.8,542.5H198.8" stroke="#555" stroke-width="1.2"/>
 <!-- new story -->
 <path d="M209.8,535.6H217.4V542.4H209.8Z" stroke="#777" stroke-width="0.9"/>
 <path d="M212.4,535.6V542.4" stroke="#777" stroke-width="0.8"/>
 <path d="M217.4,540V545M214.9,542.5H219.9" stroke="#555" stroke-width="1.2"/>
 <!-- person -->
 <circle cx="746.7" cy="553.4" r="1.8" stroke="#666" stroke-width="0.8"/>
 <path d="M743.4,559.6C743.4,556.6 750,556.6 750,559.6Z" stroke="#666" stroke-width="0.8"/>
 <path d="M813.3,555.1H818L815.65,557.8Z" fill="#111"/>
 <!-- nav -->
 <path d="M895.6,553.8V558.8" stroke="#bbb" stroke-width="0.8"/>
 <path d="M899.6,553.8V558.8L896.6,556.3Z" fill="#bbb"/>
 <path d="M909.6,553.8V558.8L906.6,556.3Z" fill="#bbb"/>
 <path d="M916.6,553.8V558.8L919.6,556.3Z" fill="#bbb"/>
 <path d="M926.8,553.8V558.8L929.8,556.3Z" fill="#bbb"/>
 <path d="M930.4,553.8V558.8" stroke="#bbb" stroke-width="0.8"/>
 <!-- view icons -->
 <g fill="#aaa">
  <rect x="942.3" y="552.7" width="2" height="2"/><rect x="945.1" y="552.7" width="2" height="2"/><rect x="947.9" y="552.7" width="2" height="2"/>
  <rect x="942.3" y="555.3" width="2" height="2"/><rect x="945.1" y="555.3" width="2" height="2"/><rect x="947.9" y="555.3" width="2" height="2"/>
  <rect x="942.3" y="557.9" width="2" height="2"/><rect x="945.1" y="557.9" width="2" height="2"/><rect x="947.9" y="557.9" width="2" height="2"/>
  <rect x="956.3" y="552.7" width="7.6" height="4.6"/>
  <rect x="956.3" y="557.9" width="2" height="2"/><rect x="959.1" y="557.9" width="2" height="2"/><rect x="961.9" y="557.9" width="2" height="2"/>
 </g>
 <rect x="970" y="552.7" width="7.3" height="7.2" fill="#666"/>
</svg>
</body></html>
